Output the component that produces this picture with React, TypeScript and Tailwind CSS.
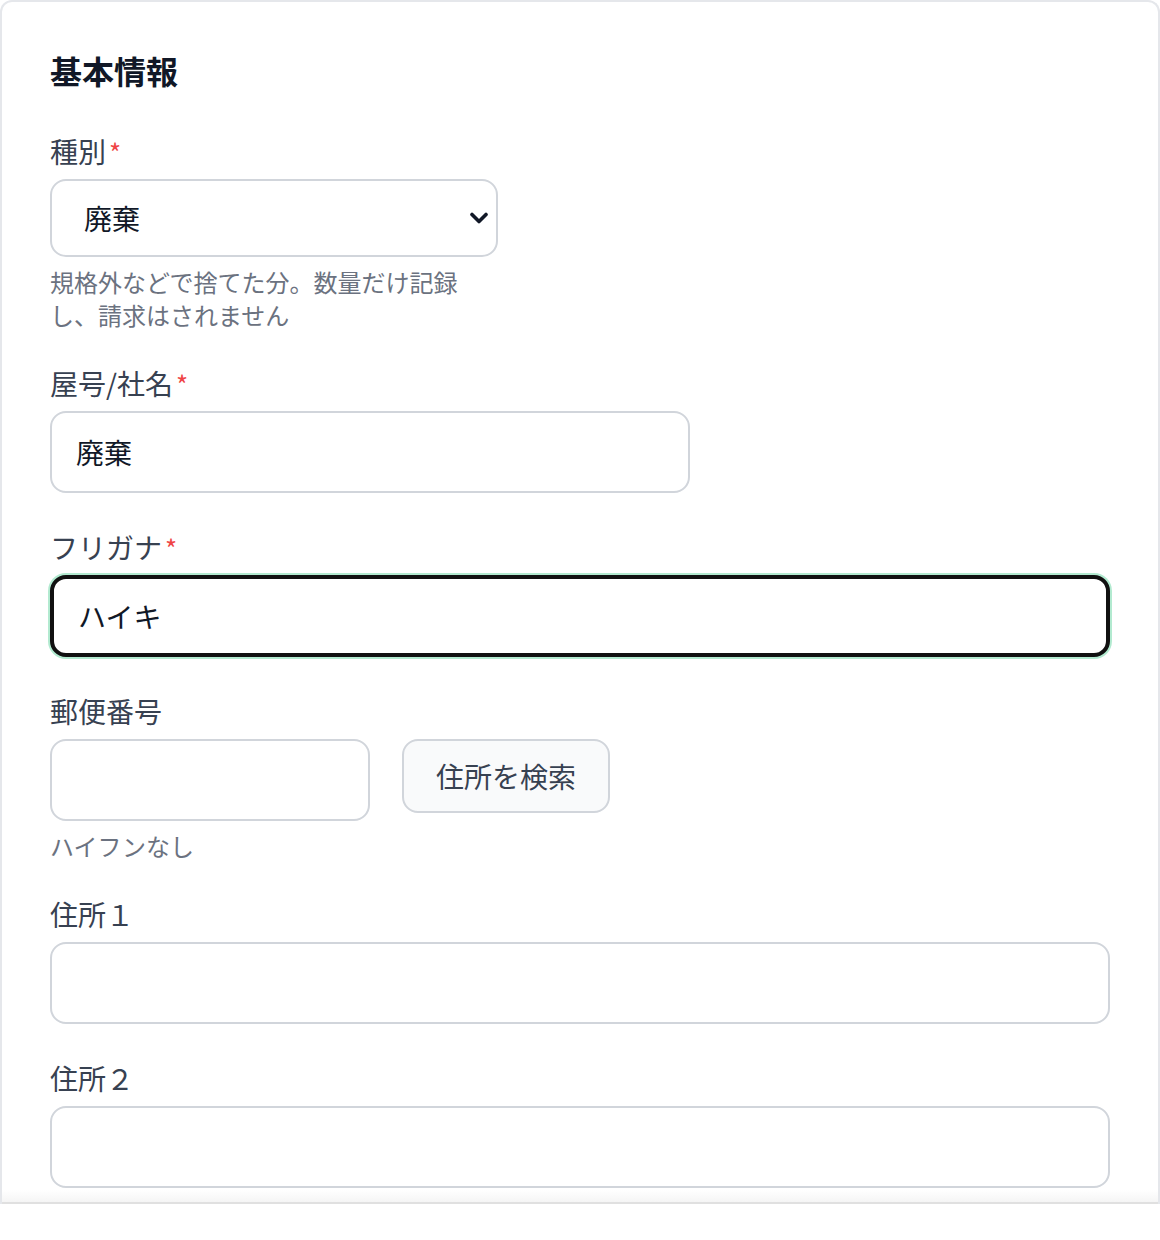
function Req() {
  return <span className="ml-[3px] text-[26px] leading-none text-[#ef4444]">*</span>;
}

function Label({ text, required = false }: { text: string; required?: boolean }) {
  return (
    <label className="mb-[6px] block h-[44px] text-[28px] leading-[44px] text-[#374151]">
      {text}
      {required && <Req />}
    </label>
  );
}

const inputBase =
  'block h-[82px] rounded-2xl border-2 border-[#d1d5db] bg-white px-6 text-[28px] text-[#111827] outline-none';

export default function App() {
  return (
    <div className="h-[1204px] overflow-hidden bg-white font-['Noto_Sans_CJK_JP','Noto_Sans',sans-serif]">
      <div className="relative h-full w-[1160px] rounded-t-xl border-2 border-b-0 border-[#e5e7eb] px-12 pt-[44px]">
        <h2 className="text-[32px] font-bold leading-[48px] text-[#111827]">基本情報</h2>

        {/* 種別 */}
        <div className="mt-[35px]">
          <Label text="種別" required />
          <div className="relative w-[448px]">
            <select
              defaultValue="haiki"
              className="block h-[78px] w-full appearance-none rounded-2xl border-2 border-[#d1d5db] bg-white pl-8 pr-12 text-[28px] text-[#111827] outline-none"
            >
              <option value="haiki">廃棄</option>
            </select>
            <svg
              viewBox="0 0 20 12"
              className="pointer-events-none absolute right-[9px] top-1/2 h-[12px] w-[20px] -translate-y-1/2 text-[#111827]"
              fill="none"
              stroke="currentColor"
              strokeWidth={3.6}
              strokeLinecap="round"
              strokeLinejoin="round"
            >
              <path d="M3 2.5 10 9.5 17 2.5" />
            </svg>
          </div>
          <p className="mt-2 w-[420px] text-[24px] leading-[33px] text-[#6b7280]">
            規格外などで捨てた分。数量だけ記録し、請求はされません
          </p>
        </div>

        {/* 屋号/社名 */}
        <div className="mt-[30px]">
          <Label text="屋号/社名" required />
          <input defaultValue="廃棄" className={`${inputBase} w-[640px]`} />
        </div>

        {/* フリガナ (focused) */}
        <div className="mt-8">
          <Label text="フリガナ" required />
          <input
            defaultValue="ハイキ"
            className="block h-[82px] w-full rounded-2xl border-4 border-[#111111] bg-white px-6 text-[28px] text-[#111827] outline-none ring-2 ring-[#b2ead0]"
          />
        </div>

        {/* 郵便番号 */}
        <div className="mt-8">
          <Label text="郵便番号" />
          <div className="flex items-start gap-8">
            <input className={`${inputBase} w-[320px]`} />
            <button className="h-[74px] w-[208px] rounded-2xl border-2 border-[#d1d5db] bg-[#f9fafb] text-[28px] text-[#374151]">
              住所を検索
            </button>
          </div>
          <p className="mt-2 text-[24px] leading-[33px] text-[#6b7280]">ハイフンなし</p>
        </div>

        {/* 住所１ */}
        <div className="mt-[30px]">
          <Label text="住所１" />
          <input className={`${inputBase} w-full`} />
        </div>

        {/* 住所２ */}
        <div className="mt-8">
          <Label text="住所２" />
          <input className={`${inputBase} w-full`} />
        </div>

        <div className="pointer-events-none absolute inset-x-0 bottom-0 h-[14px] border-b-2 border-[#e0e0e0] bg-gradient-to-b from-transparent to-[#f5f5f5]" />
      </div>
    </div>
  );
}
